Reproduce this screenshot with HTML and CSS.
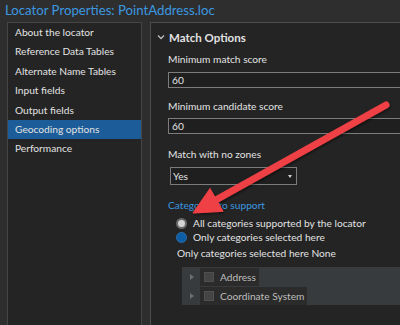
FILE: index.html
```html
<!DOCTYPE html>
<html>
<head>
<meta charset="utf-8">
<link rel="stylesheet" href="styles.css">
</head>
<body>
<div class="title">Locator Properties: PointAddress.loc</div>
<div class="main">
  <div class="nav">
    <div class="nav-item">About the locator</div>
    <div class="nav-item">Reference Data Tables</div>
    <div class="nav-item">Alternate Name Tables</div>
    <div class="nav-item">Input fields</div>
    <div class="nav-item">Output fields</div>
    <div class="nav-item selected">Geocoding options</div>
    <div class="nav-item">Performance</div>
  </div>
  <div class="content">
    <div class="section-head">
      <svg class="chev" width="8" height="6" viewBox="0 0 8 6"><polyline points="1,1.5 4,4.5 7,1.5" fill="none" stroke="#bdbdbd" stroke-width="1.3"/></svg>
      <span>Match Options</span>
    </div>
    <div class="label">Minimum match score</div>
    <div class="input">60</div>
    <div class="label l2">Minimum candidate score</div>
    <div class="input i2">60</div>
    <div class="label l3">Match with no zones</div>
    <div class="select"><span>Yes</span><span class="caret"></span></div>
    <div class="link">Categories to support</div>
    <div class="radio-row first"><span class="radio on-gray"></span><span>All categories supported by the locator</span></div>
    <div class="radio-row"><span class="radio on-blue"></span><span>Only categories selected here</span></div>
    <div class="note">Only categories selected here None</div>
    <div class="tree">
      <div class="tree-row"><span class="expander"></span><span class="tree-item"><span class="check"></span><span>Address</span></span></div>
      <div class="tree-row"><span class="expander"></span><span class="tree-item"><span class="check"></span><span>Coordinate System</span></span></div>
    </div>
  </div>
</div>
<svg class="annot" width="400" height="325" viewBox="0 0 400 325">
  <defs>
    <filter id="sh" x="-10%" y="-10%" width="120%" height="130%">
      <feDropShadow dx="1" dy="1.5" stdDeviation="1.2" flood-color="#000" flood-opacity="0.5"/>
    </filter>
  </defs>
  <g filter="url(#sh)" fill="#ee4145" stroke="#ee4145">
    <line x1="386" y1="105" x2="214" y2="201" stroke-width="7" stroke-linecap="round"/>
    <polygon points="193,213 210,188.5 223,211.3" stroke-width="1" stroke-linejoin="round"/>
  </g>
</svg>
</body>
</html>
```
FILE: styles.css
```css
html, body {
  margin: 0;
  padding: 0;
}
body {
  width: 400px;
  height: 325px;
  overflow: hidden;
  background: #2e2e2e;
  font-family: Lato, "Open Sans", sans-serif;
  font-size: 10.2px;
  color: #e2e2e2;
  position: relative;
}
.title {
  height: 22px;
  line-height: 21px;
  padding-left: 5px;
  font-size: 13.2px;
  color: #3b98e0;
  white-space: nowrap;
}
.main {
  display: flex;
  gap: 8px;
  padding-left: 7px;
  height: 303px;
}
.nav {
  width: 135px;
  flex: none;
  box-sizing: border-box;
  border: 1px solid #454545;
  border-bottom: none;
  background: #242424;
}
.nav-item {
  height: 19.4px;
  line-height: 19.4px;
  padding-left: 7px;
  white-space: nowrap;
}
.nav-item.selected {
  background: #1b5c99;
}
.content {
  flex: 1;
  min-width: 0;
  overflow: hidden;
  box-sizing: border-box;
  border-top: 1px solid #4d4d4d;
  border-left: 1px solid #4d4d4d;
  background: #242424;
  padding-left: 17px;
  white-space: nowrap;
}
.section-head {
  height: 28px;
  display: flex;
  align-items: center;
  margin-left: -11px;
  gap: 4px;
  font-size: 11.5px;
  font-weight: 700;
}
.chev {
  flex: none;
}
.label {
  height: 16px;
  line-height: 16px;
}
.l2 { margin-top: 10px; }
.l3 { margin-top: 12px; }
.input {
  margin-top: 5px;
  width: 260px;
  height: 16px;
  box-sizing: border-box;
  border: 1px solid #7c7c7c;
  background: #1f1f1f;
  line-height: 14px;
  padding-left: 3px;
}
.input.i2 { margin-top: 4px; }
.select {
  margin-top: 5px;
  margin-left: 2px;
  width: 127px;
  height: 18px;
  box-sizing: border-box;
  border: 1px solid #7c7c7c;
  background: #1f1f1f;
  display: flex;
  align-items: center;
  justify-content: space-between;
  padding: 0 4px 0 2px;
}
.caret {
  width: 0;
  height: 0;
  border-left: 2.5px solid transparent;
  border-right: 2.5px solid transparent;
  border-top: 3px solid #cfcfcf;
}
.link {
  margin-top: 12px;
  height: 16px;
  line-height: 16px;
  color: #3b98e0;
}
.radio-row {
  height: 14px;
  display: flex;
  align-items: center;
  gap: 6px;
  margin-left: 8px;
}
.radio-row.first { margin-top: 3px; }
.radio {
  width: 11px;
  height: 11px;
  box-sizing: border-box;
  border-radius: 50%;
  flex: none;
}
.on-gray {
  background: #d4d4d4;
  border: 2px solid #6a6a6a;
}
.on-blue {
  background: #0d5da5;
  border: 1px solid #2b6fae;
}
.note {
  margin-top: 1px;
  margin-left: 9px;
  height: 16px;
  line-height: 16px;
}
.tree {
  margin-top: 6px;
  margin-left: 14px;
  height: 38px;
  background: #383b3e;
  display: flex;
  flex-direction: column;
  gap: 1px;
  padding-top: 1px;
  box-sizing: border-box;
  color: #bdbdbd;
}
.tree-row {
  height: 18px;
  display: flex;
  align-items: center;
}
.expander {
  width: 0;
  height: 0;
  margin-left: 8px;
  margin-right: 6px;
  border-top: 3.5px solid transparent;
  border-bottom: 3.5px solid transparent;
  border-left: 4px solid #6d6d6d;
}
.tree-item {
  height: 18px;
  display: flex;
  align-items: center;
  gap: 6px;
  padding: 0 3px 0 4px;
  background: #2b2b2b;
}
.check {
  width: 10px;
  height: 10px;
  box-sizing: border-box;
  background: #444;
  border: 1px solid #505050;
  flex: none;
}
.annot {
  position: absolute;
  left: 0;
  top: 0;
  pointer-events: none;
}
```
